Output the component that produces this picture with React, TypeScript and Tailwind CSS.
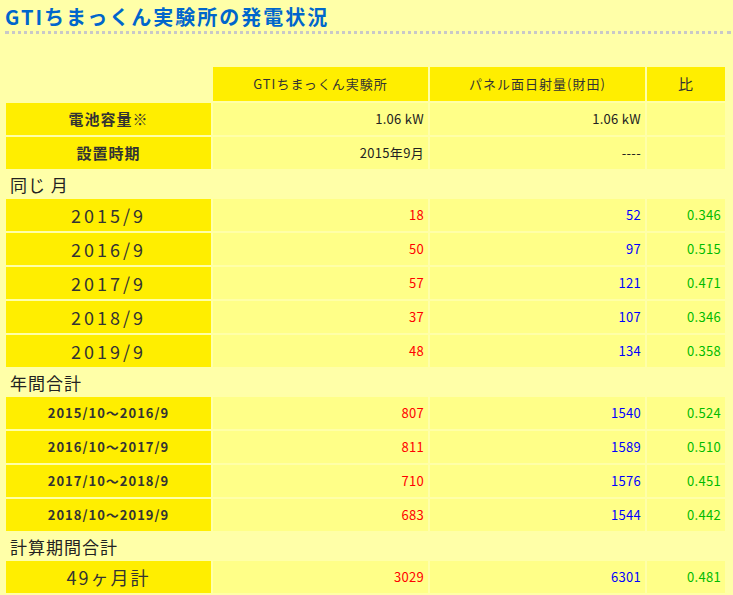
export default function App() {
  const f = { fontFamily: '"Noto Sans CJK JP", "Liberation Sans", sans-serif' };
  const H = "bg-[#ffee00] text-center text-[#333]";
  const D = "bg-[#ffff88] text-right pr-1 text-[13px] tracking-[0.3px]";
  const data = (a: string, b: string, c: string, cls: string, hcls: string, h: string) => (
    <tr className={h}>
      <td className={`${H} ${hcls}`}>{a}</td>
      <td className={`${D} text-[#ff0000]`}>{b}</td>
      <td className={`${D} text-[#0000ff]`}>{c}</td>
      <td className={`${D} text-[#00bb00]`}>{cls}</td>
    </tr>
  );
  const label = (t: string) => (
    <tr className="h-[26px]">
      <td colSpan={4} className="text-[17px] text-[#222] pl-1 leading-none tracking-[1px]">{t}</td>
    </tr>
  );
  return (
    <div className="w-[733px] h-[595px] bg-[#ffffa8] overflow-hidden" style={f}>
      <div className="pl-[5px] pt-[4px] mr-[2px]">
        <h1 className="text-[20px] font-bold text-[#0066cc] leading-[26px] tracking-[2px] border-b-[3px] border-dotted border-[#c8c8c8] pb-[1px]">GTIちまっくん実験所の発電状況</h1>
      </div>
      <table className="ml-[4px] mt-[31px] border-separate border-spacing-[2px]">
        <tbody>
          <tr className="h-[34px] text-[13px] tracking-[1px]">
            <td className="w-[205px]"></td>
            <td className={`${H} w-[215px]`}>GTIちまっくん実験所</td>
            <td className={`${H} w-[215px]`}>パネル面日射量(財田)</td>
            <td className={`${H} w-[78px] text-[15px]`}>比</td>
          </tr>
          <tr className="h-[32px]">
            <td className={`${H} text-[15px] font-bold tracking-[1px]`}>電池容量※</td>
            <td className={`${D} text-[#222]`}>1.06 kW</td>
            <td className={`${D} text-[#222]`}>1.06 kW</td>
            <td className="bg-[#ffff88]"></td>
          </tr>
          <tr className="h-[32px]">
            <td className={`${H} text-[15px] font-bold tracking-[1px]`}>設置時期</td>
            <td className={`${D} text-[#222]`}>2015年9月</td>
            <td className={`${D} text-[#222]`}>----</td>
            <td className="bg-[#ffff88]"></td>
          </tr>
          {label("同じ 月")}
          {data("2015/9", "18", "52", "0.346", "text-[18px] tracking-[3px]", "h-[32px]")}
          {data("2016/9", "50", "97", "0.515", "text-[18px] tracking-[3px]", "h-[32px]")}
          {data("2017/9", "57", "121", "0.471", "text-[18px] tracking-[3px]", "h-[32px]")}
          {data("2018/9", "37", "107", "0.346", "text-[18px] tracking-[3px]", "h-[32px]")}
          {data("2019/9", "48", "134", "0.358", "text-[18px] tracking-[3px]", "h-[32px]")}
          {label("年間合計")}
          {data("2015/10〜2016/9", "807", "1540", "0.524", "text-[13px] font-bold tracking-[1px]", "h-[32px]")}
          {data("2016/10〜2017/9", "811", "1589", "0.510", "text-[13px] font-bold tracking-[1px]", "h-[32px]")}
          {data("2017/10〜2018/9", "710", "1576", "0.451", "text-[13px] font-bold tracking-[1px]", "h-[32px]")}
          {data("2018/10〜2019/9", "683", "1544", "0.442", "text-[13px] font-bold tracking-[1px]", "h-[32px]")}
          {label("計算期間合計")}
          {data("49ヶ月計", "3029", "6301", "0.481", "text-[18px] tracking-[2px]", "h-[32px]")}
        </tbody>
      </table>
    </div>
  );
}
